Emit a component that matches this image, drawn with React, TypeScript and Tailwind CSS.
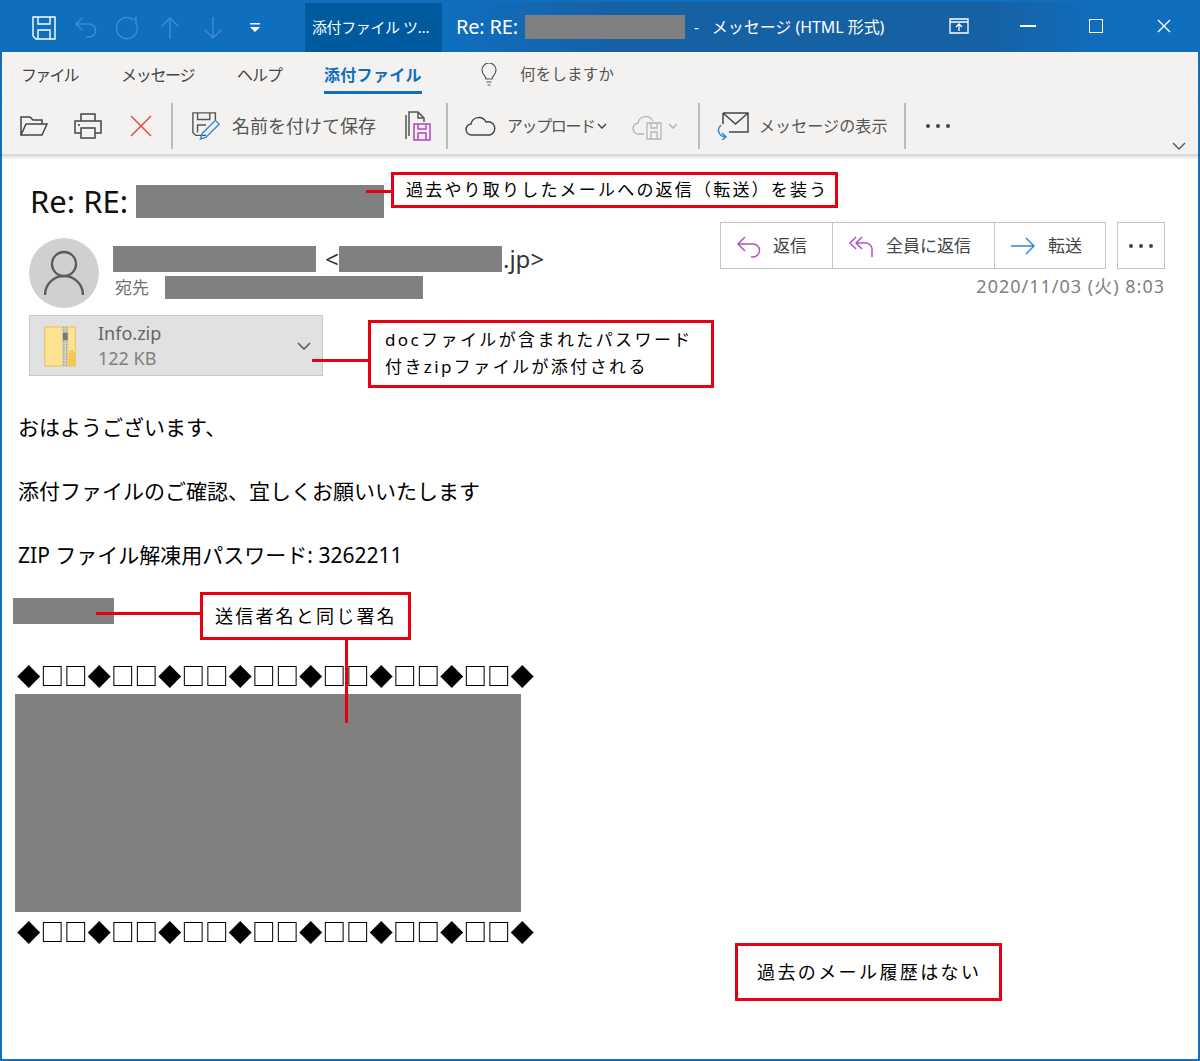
import type { ReactNode } from "react";

const diamonds = "◆□□◆□□◆□□◆□□◆□□◆□□◆□□◆";

function Redact({ className }: { className: string }) {
  return <div className={`bg-[#808080] shrink-0 ${className}`} />;
}

function Separator({ className }: { className: string }) {
  return <div className={`w-[2px] h-[46px] bg-[#bdbbb9] shrink-0 ${className}`} />;
}

function Note({ className, children }: { className: string; children: ReactNode }) {
  return (
    <div className={`absolute border-[3px] border-[#e60012] bg-white text-black flex items-center ${className}`}>
      {children}
    </div>
  );
}

function Dots({ className }: { className: string }) {
  return (
    <svg viewBox="0 0 26 6" className={className} fill="currentColor">
      <circle cx="3" cy="3" r="2" />
      <circle cx="13" cy="3" r="2" />
      <circle cx="23" cy="3" r="2" />
    </svg>
  );
}

function TitleBar() {
  return (
    <div className="h-[52px] pt-[4px] flex items-center text-white bg-[linear-gradient(90deg,#106ebe_38%,#1660a4_52%,#1660a4_82%,#106ebe_92%)]">
      {/* quick access */}
      <svg viewBox="0 0 24 24" className="ml-[32px] w-[24px] h-[24px]" fill="none" stroke="#fff" strokeWidth="1.4">
        <path d="M1 1h22v22H4l-3-3z" />
        <path d="M6 1v7h12V1M6 23v-9h12v9" />
      </svg>
      <svg viewBox="0 0 24 24" className="ml-[18px] w-[24px] h-[24px]" fill="none" stroke="#3d8bd0" strokeWidth="1.5">
        <path d="M8 2 2 8l6 6M2 8h13a6.500 6.500 0 0 1 0 13h-3" />
      </svg>
      <svg viewBox="0 0 24 24" className="ml-[18px] w-[24px] h-[24px]" fill="none" stroke="#3d8bd0" strokeWidth="1.5">
        <path d="M14 3h6V1M20 3v6M20 7a10.500 10.500 0 1 1-4-4" />
      </svg>
      <svg viewBox="0 0 20 24" className="ml-[20px] w-[20px] h-[24px]" fill="none" stroke="#3d8bd0" strokeWidth="1.5">
        <path d="M10 23V2M2 10l8-8 8 8" />
      </svg>
      <svg viewBox="0 0 20 24" className="ml-[23px] w-[20px] h-[24px]" fill="none" stroke="#3d8bd0" strokeWidth="1.5">
        <path d="M10 1v21M2 14l8 8 8-8" />
      </svg>
      <svg viewBox="0 0 10 10" className="ml-[27px] w-[10px] h-[10px]" fill="#fff">
        <path d="M0 0h10v1.500H0zM0 4h10L5 9z" />
      </svg>
      <div className="ml-[45px] self-end w-[137px] h-[49px] bg-[#005a9e] flex items-center pl-[7px] text-[15px] tracking-[-0.4px] whitespace-nowrap">
        添付ファイル ツ…
      </div>
      <div className="flex items-center -mt-[2px]">
        <span className="ml-[14px] w-[66px] text-[20px] tracking-[-0.2px] whitespace-nowrap">Re: RE:</span>
        <Redact className="ml-[3px] w-[160px] h-[24px]" />
        <span className="ml-[9px] text-[15px]">-</span>
        <span className="ml-[13px] text-[16px] tracking-[-0.05px] whitespace-nowrap">メッセージ (HTML 形式)</span>
      </div>
      {/* window buttons */}
      <div className="ml-auto flex items-center -mt-[4px]">
        <svg viewBox="0 0 20 16" className="w-[20px] h-[16px]" fill="none" stroke="#fff" strokeWidth="1.300">
          <path d="M1 1h18v14H1zM1 4h18M10 13V6M7 9l3-3 3 3" />
        </svg>
        <div className="ml-[51px] w-[16px] h-[2px] bg-white" />
        <div className="ml-[53px] w-[14px] h-[14px] border-[1.500px] border-white" />
        <svg viewBox="0 0 14 14" className="ml-[54px] mr-[29px] w-[14px] h-[14px]" fill="none" stroke="#fff" strokeWidth="1.400">
          <path d="M1 1l12 12M13 1 1 13" />
        </svg>
      </div>
    </div>
  );
}

function Tabs() {
  return (
    <div className="h-[48px] flex items-start pt-[11px] text-[#444] text-[16px]">
      <span className="ml-[21px] w-[56px] tracking-[-1.800px] whitespace-nowrap">ファイル</span>
      <span className="ml-[44px] w-[73px] tracking-[-1.300px] whitespace-nowrap">メッセージ</span>
      <span className="ml-[43px] w-[46px] tracking-[-1px] whitespace-nowrap">ヘルプ</span>
      <div className="ml-[41px] w-[98px] h-[31px] border-b-[3px] border-[#106ebe]">
        <span className="block text-[#106ebe] font-bold tracking-[0.3px] whitespace-nowrap">添付ファイル</span>
      </div>
      <svg viewBox="0 0 16 24" className="ml-[59px] w-[16px] h-[24px]" fill="none" stroke="#555" strokeWidth="1.200">
        <path d="M5 16c0-3-4-4-4-9a7 7 0 0 1 14 0c0 5-4 6-4 9zM5.500 19h5M6.500 22h3" />
      </svg>
      <span className="ml-[23px] text-[15.500px] tracking-[0.2px] text-[#555] whitespace-nowrap">何をしますか</span>
    </div>
  );
}

function Toolbar() {
  return (
    <div className="relative h-[55px] pb-[2px] flex items-center text-[#555] shadow-[0_2px_3px_rgba(0,0,0,0.18)] border-b border-[#dcdad8]">
      <svg viewBox="0 0 28 20" className="ml-[20px] w-[28px] h-[20px]" fill="none" stroke="#444" strokeWidth="1.500">
        <path d="M1 19V1h9l3 3h9v4M1 19h21l5-11H6z" />
      </svg>
      <svg viewBox="0 0 28 28" className="ml-[26px] w-[28px] h-[28px]" fill="none" stroke="#444" strokeWidth="1.500">
        <path d="M7 9V2h14v7M7 21H1V9h26v12h-6M7 16h14v10H7zM4 13h2" />
      </svg>
      <svg viewBox="0 0 22 22" className="ml-[28px] w-[22px] h-[22px]" fill="none" stroke="#e8474c" strokeWidth="1.500">
        <path d="M1 1l20 20M21 1 1 21" />
      </svg>
      <Separator className="ml-[19px]" />
      <svg viewBox="0 0 32 32" className="ml-[18px] w-[30px] h-[30px]" fill="none" strokeWidth="1.500">
        <path d="M16 26H5l-3-3V2h24v8M7 2v7h13V2M7 23v-8h9" stroke="#555" />
        <path d="M10 30l2-6L26 10l4 4-14 14z" stroke="#2b88d8" />
      </svg>
      <span className="ml-[11px] text-[18px] whitespace-nowrap">名前を付けて保存</span>
      <svg viewBox="0 0 28 30" className="ml-[27px] w-[28px] h-[30px]" fill="none" strokeWidth="1.500">
        <path d="M3 4v24M6 25V1h9l6 6v4M15 1v6h6" stroke="#555" />
        <path d="M11 13h16v16H11zM15 13v5h8v-5M15 29v-7h8v7" stroke="#b146c2" />
      </svg>
      <Separator className="ml-[15px]" />
      <svg viewBox="0 0 32 20" className="ml-[17px] w-[32px] h-[20px]" fill="none" stroke="#444" strokeWidth="1.400">
        <path d="M7 19a5.500 5.500 0 0 1-1-11 8 8 0 0 1 15-2 6.500 6.500 0 0 1 4 13z" />
      </svg>
      <span className="ml-[10px] text-[16px] tracking-[-1.400px] whitespace-nowrap w-[86px]">アップロード</span>
      <svg viewBox="0 0 10 6" className="ml-[4px] w-[10px] h-[6px]" fill="none" stroke="#444" strokeWidth="1.500">
        <path d="M1 1l4 4 4-4" />
      </svg>
      <svg viewBox="0 0 34 30" className="ml-[25px] w-[34px] h-[30px]" fill="none" stroke="#b5b5b5" strokeWidth="1.300">
        <path d="M12 23H7a5 5 0 0 1-1-11 8 8 0 0 1 15-2" />
        <path d="M15 12h14v16H15zM19 12v5h6v-5M19 28v-7h6v7" />
      </svg>
      <svg viewBox="0 0 10 6" className="ml-[2px] w-[10px] h-[6px]" fill="none" stroke="#b5b5b5" strokeWidth="1.500">
        <path d="M1 1l4 4 4-4" />
      </svg>
      <Separator className="ml-[20px]" />
      <svg viewBox="0 0 32 28" className="ml-[17px] w-[32px] h-[28px]" fill="none" strokeWidth="1.500">
        <path d="M6 1h25v19H12M6 1v11M6 1l12.500 11L31 1" stroke="#444" />
        <path d="M4 13c-5 5-2 11 4 12M5 21l4 4-4 3" stroke="#2b88d8" />
      </svg>
      <span className="ml-[10px] text-[16px] tracking-[0.1px] whitespace-nowrap w-[128px]">メッセージの表示</span>
      <Separator className="ml-[17px]" />
      <Dots className="ml-[19px] w-[26px] h-[6px] text-[#444]" />
      <svg viewBox="0 0 14 8" className="absolute right-[14px] bottom-[4px] w-[14px] h-[8px]" fill="none" stroke="#555" strokeWidth="1.400">
        <path d="M1 1l6 6 6-6" />
      </svg>
    </div>
  );
}

function ReplyButtons() {
  return (
    <div className="flex items-start">
      <div className="flex h-[47px] border border-[#c4c4c4] text-[17px] text-[#444]">
        <div className="w-[112px] flex items-center pl-[15px] border-r border-[#c4c4c4]">
          <svg viewBox="0 0 26 24" className="w-[26px] h-[24px]" fill="none" stroke="#b552c6" strokeWidth="1.500">
            <path d="M9 3 2 10l7 7M2 10h15a6.500 6.500 0 0 1 0 13h-2" />
          </svg>
          <span className="ml-[11px]">返信</span>
        </div>
        <div className="w-[162px] flex items-center pl-[16px] border-r border-[#c4c4c4]">
          <svg viewBox="0 0 26 24" className="w-[26px] h-[24px]" fill="none" stroke="#b552c6" strokeWidth="1.500">
            <path d="M7 3 1 9l6 6M13 3 7 9l6 6M7 9h10a6.500 6.500 0 0 1 6 7v7" />
          </svg>
          <span className="ml-[11px] whitespace-nowrap">全員に返信</span>
        </div>
        <div className="w-[110px] flex items-center pl-[16px]">
          <svg viewBox="0 0 24 18" className="w-[24px] h-[18px]" fill="none" stroke="#2b88d8" strokeWidth="1.500">
            <path d="M0 9h23M15 1l8 8-8 8" />
          </svg>
          <span className="ml-[13px]">転送</span>
        </div>
      </div>
      <div className="ml-[11px] w-[48px] h-[47px] border border-[#c4c4c4] flex items-center justify-center">
        <Dots className="w-[26px] h-[6px] text-[#444]" />
      </div>
    </div>
  );
}

function ZipIcon() {
  return (
    <svg viewBox="0 0 34 44" className="ml-[13px] w-[34px] h-[42px] shrink-0">
      <path d="M1 2h32v41H1z" fill="#fde293" stroke="#e8bf50" />
      <rect x="19" y="2" width="7" height="41" fill="#d9d2b8" />
      <path d="M21 2v41M24 2v41" stroke="#8a8a80" strokeWidth="1" strokeDasharray="1.500 1.500" />
      <rect x="20" y="8" width="5" height="8" fill="#777" />
      <path d="M26 43V30l3.500-5 3.500 5v13z" fill="#f5c84f" />
    </svg>
  );
}

function MailHeader() {
  return (
    <>
      <div className="ml-[30px] mt-[30px] h-[33px] flex items-center text-[31px] text-[#111]">
        <span className="w-[98px] whitespace-nowrap">Re: RE:</span>
        <Redact className="ml-[8px] w-[248px] h-[33px]" />
      </div>
      <div className="mt-[4px] pl-[29px] pr-[35px] flex justify-between h-[93px]">
        <div className="flex items-start">
          <div className="mt-[16px] w-[70px] h-[70px] rounded-full bg-[#d2d0ce] flex items-center justify-center">
            <svg viewBox="0 0 40 46" className="w-[40px] h-[46px]" fill="none" stroke="#5c5c5c" strokeWidth="2.400">
              <circle cx="20" cy="14" r="12" />
              <path d="M1 45c0-10 8-19 19-19s19 9 19 19" />
            </svg>
          </div>
          <div className="ml-[14px] mt-[24px]">
            <div className="flex items-center h-[26px] text-[24px] text-[#333]">
              <Redact className="w-[203px] h-[26px]" />
              <span className="ml-[9px] w-[14px]">&lt;</span>
              <Redact className="w-[163px] h-[26px]" />
              <span className="ml-[1px] whitespace-nowrap">.jp&gt;</span>
            </div>
            <div className="mt-[4px] flex items-center h-[23px] text-[17px] text-[#707070]">
              <span className="ml-[2px] w-[50px]">宛先</span>
              <Redact className="w-[258px] h-[23px]" />
            </div>
          </div>
        </div>
        <div className="flex flex-col items-end">
          <ReplyButtons />
          <div className="mt-[4px] text-[18px] text-[#808080] tracking-[1px] whitespace-nowrap">2020/11/03 (火) 8:03</div>
        </div>
      </div>
      <div className="ml-[29px] w-[294px] h-[61px] bg-[#e1e1e1] border border-[#c8c8c8] flex items-center">
        <ZipIcon />
        <div className="ml-[21px] text-[18px] leading-[25px] text-[#666]">
          <div>Info.zip</div>
          <div className="text-[#808080]">122 KB</div>
        </div>
        <svg viewBox="0 0 14 8" className="ml-auto mr-[11px] w-[14px] h-[8px]" fill="none" stroke="#555" strokeWidth="1.500">
          <path d="M1 1l6 6 6-6" />
        </svg>
      </div>
    </>
  );
}

function MailBody() {
  return (
    <div className="text-[21px] leading-[32px] text-black">
      <p className="ml-[18px] mt-[35px]">おはようございます、</p>
      <p className="ml-[18px] mt-[32px]">添付ファイルのご確認、宜しくお願いいたします</p>
      <p className="ml-[18px] mt-[32px] whitespace-nowrap">ZIP ファイル解凍用パスワード: 3262211</p>
      <Redact className="ml-[13px] mt-[27px] w-[101px] h-[26px]" />
      <p className="ml-[17px] mt-[36px] text-[23.500px] font-bold whitespace-nowrap will-change-transform">{diamonds}</p>
      <Redact className="ml-[15px] mt-[2px] w-[506px] h-[218px]" />
      <p className="ml-[17px] mt-[4px] text-[23.500px] font-bold whitespace-nowrap will-change-transform">{diamonds}</p>
    </div>
  );
}

function Annotations() {
  return (
    <>
      <div className="absolute left-[366px] top-[190px] w-[25px] h-[3px] bg-[#e60012]" />
      <Note className="left-[391px] top-[172px] w-[447px] h-[36px] pl-[12px] text-[17px] tracking-[2.200px] whitespace-nowrap">
        過去やり取りしたメールへの返信（転送）を装う
      </Note>
      <div className="absolute left-[312px] top-[359px] w-[56px] h-[3px] bg-[#e60012]" />
      <Note className="left-[368px] top-[320px] w-[346px] h-[68px] pl-[14px] text-[17px] leading-[27px] tracking-[2.400px] whitespace-nowrap">
        <div className="-mt-[2px]">
          docファイルが含まれたパスワード
          <br />
          付きzipファイルが添付される
        </div>
      </Note>
      <div className="absolute left-[96px] top-[612px] w-[104px] h-[3px] bg-[#e60012]" />
      <div className="absolute left-[345px] top-[639px] w-[3px] h-[84px] bg-[#e60012]" />
      <Note className="left-[200px] top-[592px] w-[211px] h-[48px] pl-[12px] text-[18px] tracking-[2.200px] whitespace-nowrap">
        送信者名と同じ署名
      </Note>
      <Note className="left-[735px] top-[943px] w-[267px] h-[58px] pl-[19px] text-[18px] tracking-[2.400px] whitespace-nowrap">
        過去のメール履歴はない
      </Note>
    </>
  );
}

export default function App() {
  return (
    <div className="relative w-[1200px] h-[1061px] overflow-hidden bg-white font-['Noto_Sans','Noto_Sans_CJK_JP',sans-serif]">
      <TitleBar />
      <div className="bg-[#f3f2f1]">
        <Tabs />
        <Toolbar />
      </div>
      <MailHeader />
      <MailBody />
      <Annotations />
      {/* window frame */}
      <div className="absolute inset-0 border-2 border-[#106ebe] pointer-events-none" />
    </div>
  );
}
